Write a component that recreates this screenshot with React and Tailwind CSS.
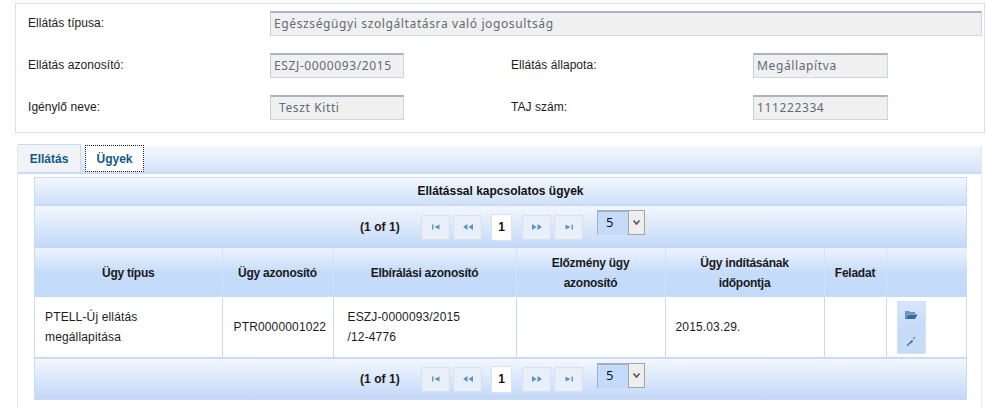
import React from 'react'

const headerBg = 'bg-gradient-to-b from-[#f3f7fe] to-[#c2d8f8]'

function ReadOnly({ value, width, indent }) {
  return (
    <div className={`${width} h-[25px] flex items-center bg-[#f0f0f0] border border-[#c6d7ee] border-t-2 border-t-[#a9b3c4] border-l-[#c3cede] text-[12px] tracking-[0.62px] text-[#626a76] font-['Noto_Sans',sans-serif] ${indent ? 'pl-[8px]' : 'pl-[3px]'}`}>
      {value}
    </div>
  )
}

function PagerButton({ children }) {
  return (
    <div className="w-[29px] h-[25px] flex items-center justify-center bg-[#e9eff8] border border-[#d6e0ee] rounded-[2px]">
      <svg width="12" height="8" viewBox="0 0 12 8" className="text-[#5f93bd]" fill="currentColor">{children}</svg>
    </div>
  )
}

function Paginator({ selectTop }) {
  return (
    <div className={`flex items-center h-full ${headerBg}`}>
      <span className="ml-[325px] w-[61px] text-[12px] font-bold text-[#1a1a1a]">(1 of 1)</span>
      <div className="flex items-center gap-[3px]">
        <PagerButton><rect x="2" y="1.5" width="1.4" height="5" /><path d="M9.5 1.5v5L4.5 4z" /></PagerButton>
        <PagerButton><path d="M5.5 1v6L1 4zM11 1v6L6.5 4z" /></PagerButton>
      </div>
      <div className="ml-[9px] w-[21px] h-[27px] flex items-center justify-center bg-white border border-[#d8e4f5] text-[12px] font-bold text-[#111]">1</div>
      <div className="ml-[10px] flex items-center gap-[3px]">
        <PagerButton><path d="M1 1v6l4.5-3zM6.5 1v6L11 4z" /></PagerButton>
        <PagerButton><path d="M2.5 1.5v5L7.5 4z" /><rect x="8.6" y="1.5" width="1.4" height="5" /></PagerButton>
      </div>
      <div className={`ml-[14px] flex h-[25px] ${selectTop}`}>
        <div className="w-[31px] bg-[#c4dbfb] border-t-2 border-l border-[#a4afc0] pl-[8px] text-[13px] leading-[20px] text-[#111] font-['Noto_Sans',sans-serif]">5</div>
        <div className="w-[17px] flex items-center justify-center bg-[#eeeeee] border border-[#a4a4a4]">
          <svg width="9" height="7" viewBox="0 0 9 7" fill="none" stroke="#555" strokeWidth="1.6"><path d="M1.5 1.5 4.5 5l3-3.5" /></svg>
        </div>
      </div>
    </div>
  )
}

const cols = ['w-[187px]', 'w-[111px]', 'w-[183px]', 'w-[149px]', 'w-[159px]', 'w-[62px]', 'w-[81px]']
const heads = ['Ügy típus', 'Ügy azonosító', 'Elbírálási azonosító', 'Előzmény ügy azonosító', 'Ügy indításának időpontja', 'Feladat', '']

export default function App() {
  return (
    <div className="w-[987px] h-[408px] overflow-hidden bg-white font-['Liberation_Sans',Arial,sans-serif] text-[12px] tracking-[0.05px] text-[#222]">
      <div className="ml-[15px] mt-[3px] w-[970px] h-[130px] border border-[#dcdfe4] pl-[12px] pr-[2px] pt-[7px] flex flex-col gap-[17px]">
        <div className="flex">
          <div className="w-[242px] pt-[3px] text-[#1c1c1c]">Ellátás típusa:</div>
          <ReadOnly value="Egészségügyi szolgáltatásra való jogosultság" width="flex-1" />
        </div>
        <div className="flex">
          <div className="w-[242px] pt-[3px] text-[#1c1c1c]">Ellátás azonosító:</div>
          <ReadOnly value="ESZJ-0000093/2015" width="w-[134px]" />
          <div className="ml-[107px] w-[242px] pt-[3px] text-[#1c1c1c]">Ellátás állapota:</div>
          <ReadOnly value="Megállapítva" width="w-[135px]" />
        </div>
        <div className="flex">
          <div className="w-[242px] pt-[3px] text-[#1c1c1c]">Igénylő neve:</div>
          <ReadOnly value="Teszt Kitti" width="w-[134px]" indent />
          <div className="ml-[107px] w-[242px] pt-[3px] text-[#1c1c1c]">TAJ szám:</div>
          <ReadOnly value="111222334" width="w-[135px]" />
        </div>
      </div>

      <div className="ml-[17px] mt-[13px] w-[965px] h-[262px] border-x border-[#e3e8f0]">
        <div className="h-[28px] flex items-end gap-[4px] bg-gradient-to-b from-[#f4f8fe] to-[#d5e3f8] border-b-2 border-[#c9dcf7]">
          <div className="w-[63px] h-[28px] flex items-center justify-center bg-[#f1f3f6] border-t border-r border-[#c9daf2] text-[12px] tracking-normal font-bold text-[#0f5a86]">Ellátás</div>
          <div className="w-[59px] h-[27px] flex items-center justify-center bg-white border border-dotted border-[#222] text-[12px] tracking-normal font-bold text-[#0f5a86]">Ügyek</div>
        </div>

        <div className="ml-[16px] mt-[3px] w-[933px] border border-[#c8daf4]">
          <div className={`h-[28px] flex items-center justify-center border-b-2 border-[#c9dcf7] font-bold tracking-normal text-[#111] ${headerBg} from-[#eef4fd] to-[#cfe0f9]`}>Ellátással kapcsolatos ügyek</div>
          <div className="h-[42px]"><Paginator selectTop="-mt-[9px]" /></div>

          <table className="table-fixed border-collapse w-[932px]">
            <colgroup>
              {cols.map((c, i) => <col key={i} className={c} />)}
            </colgroup>
            <thead>
              <tr className="h-[49px] bg-gradient-to-b from-[#eef4fe] via-[#c6dcfb] to-[#c4dafa]">
                {heads.map((h, i) => (
                  <th key={i} className="border-r border-[#d4e2f7] last:border-r-0 px-[6px] text-center text-[12px] leading-[20px] tracking-[-0.25px] font-bold text-[#1a1a1a]">
                    {i === 3 || i === 4 ? <span className="inline-block w-[120px]">{h}</span> : h}
                  </th>
                ))}
              </tr>
            </thead>
            <tbody>
              <tr className="h-[60px] text-[12px] leading-[20px] tracking-[0.15px] text-[#1c1c1c]">
                <td className="border-r border-[#c8d9f0] pl-[10px] pr-[40px]">PTELL-Új ellátás megállapitása</td>
                <td className="border-r border-[#c8d9f0] pl-[11px]">PTR0000001022</td>
                <td className="border-r border-[#c8d9f0] pl-[14px]">ESZJ-0000093/2015<br />/12-4776</td>
                <td className="border-r border-[#c8d9f0]"></td>
                <td className="border-r border-[#c8d9f0] pl-[10px]">2015.03.29.</td>
                <td className="border-r border-[#c8d9f0]"></td>
                <td className="pl-[10px]">
                  <div className="w-[29px] flex flex-col bg-[#c9def9] border border-[#d4e2f5]">
                    <div className="h-[27px] flex items-center justify-center bg-gradient-to-b from-[#d6e5fb] to-[#c5dbf9]">
                      <svg width="14" height="10" viewBox="0 0 14 10"><path d="M1 1h4l1 1h5v2H4L2 9H1z" fill="#6f97b5" /><path d="M4 4.5h9.5L11 9H2z" fill="#2f6f9f" /></svg>
                    </div>
                    <div className="h-[24px] flex items-center justify-center bg-[#c5dbf8]">
                      <svg width="10" height="10" viewBox="0 0 10 10"><path d="M.5 9.5 6 4l1.2 1.2L1.5 10z" fill="#2f6a99" /><path d="M8 .5l.4 1.1 1.1.4-1.1.4-.4 1.1-.4-1.1-1.1-.4 1.1-.4z" fill="#4f87b3" /></svg>
                    </div>
                  </div>
                </td>
              </tr>
            </tbody>
          </table>

          <div className="h-[42px] border-t-2 border-[#c9dcf7]"><Paginator selectTop="-mt-[7px]" /></div>
        </div>
      </div>
    </div>
  )
}
